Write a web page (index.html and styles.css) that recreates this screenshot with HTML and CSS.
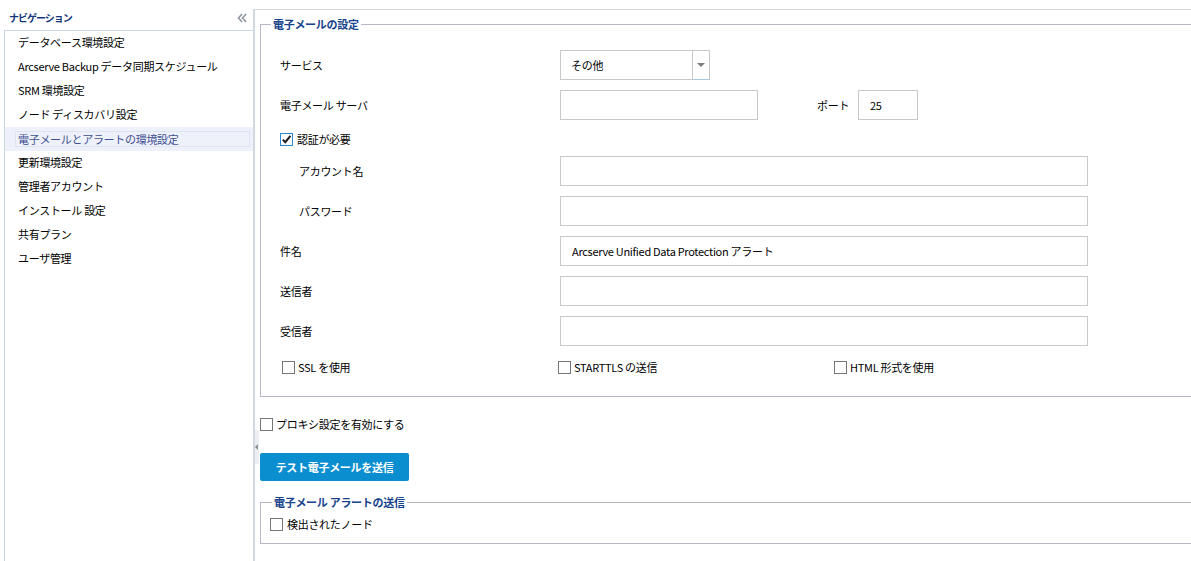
FILE: index.html
```html
<!DOCTYPE html>
<html lang="ja">
<head>
<meta charset="utf-8">
<title>電子メールとアラートの環境設定</title>
<link rel="stylesheet" href="styles.css">
</head>
<body>
<div class="app">
  <aside class="nav">
    <div class="nav-header">
      <span class="nav-title">ナビゲーション</span>
      <svg class="collapse" width="10" height="10" viewBox="0 0 10 10"><path d="M5 1 L1.5 5 L5 9 M9 1 L5.5 5 L9 9" fill="none" stroke="#8d96a0" stroke-width="1.6"/></svg>
    </div>
    <ul class="nav-list">
      <li class="nav-item">データベース環境設定</li>
      <li class="nav-item">Arcserve Backup データ同期スケジュール</li>
      <li class="nav-item">SRM 環境設定</li>
      <li class="nav-item">ノード ディスカバリ設定</li>
      <li class="nav-item selected"><span class="sel-inner">電子メールとアラートの環境設定</span></li>
      <li class="nav-item">更新環境設定</li>
      <li class="nav-item">管理者アカウント</li>
      <li class="nav-item">インストール 設定</li>
      <li class="nav-item">共有プラン</li>
      <li class="nav-item">ユーザ管理</li>
    </ul>
  </aside>
  <main class="content">
    <span class="splitter"><span class="splitter-arrow"></span></span>
    <fieldset class="group group-settings">
      <legend class="group-title">電子メールの設定</legend>
      <div class="row">
        <span class="lbl">サービス</span>
        <div class="combo"><span class="combo-value">その他</span><span class="combo-trigger"><span class="tri"></span></span></div>
      </div>
      <div class="row">
        <span class="lbl">電子メール サーバ</span>
        <div class="input w-server"></div>
        <span class="port-lbl">ポート</span>
        <div class="input w-port">25</div>
      </div>
      <div class="row row-check">
        <span class="cb checked"><svg width="11" height="11" viewBox="0 0 11 11"><path d="M1.8 5.6 L4.3 8.2 L9.4 1.8" fill="none" stroke="#1a1a1a" stroke-width="2"/></svg></span>
        <span class="cb-text">認証が必要</span>
      </div>
      <div class="row">
        <span class="lbl indent">アカウント名</span>
        <div class="input w-long"></div>
      </div>
      <div class="row">
        <span class="lbl indent">パスワード</span>
        <div class="input w-long"></div>
      </div>
      <div class="row">
        <span class="lbl">件名</span>
        <div class="input w-long">Arcserve Unified Data Protection アラート</div>
      </div>
      <div class="row">
        <span class="lbl">送信者</span>
        <div class="input w-long"></div>
      </div>
      <div class="row">
        <span class="lbl">受信者</span>
        <div class="input w-long"></div>
      </div>
      <div class="options">
        <div class="opt"><span class="cb"></span><span class="opt-text">SSL を使用</span></div>
        <div class="opt"><span class="cb"></span><span class="opt-text">STARTTLS の送信</span></div>
        <div class="opt"><span class="cb"></span><span class="opt-text">HTML 形式を使用</span></div>
      </div>
    </fieldset>
    <div class="proxy"><span class="cb"></span><span class="proxy-text">プロキシ設定を有効にする</span></div>
    <button class="btn" type="button">テスト電子メールを送信</button>
    <fieldset class="group group-alerts">
      <legend class="group-title">電子メール アラートの送信</legend>
      <div class="alert-row"><span class="cb"></span><span class="alert-text">検出されたノード</span></div>
    </fieldset>
  </main>
</div>
</body>
</html>
```

FILE: styles.css
```css
html, body {
  margin: 0;
  padding: 0;
  background: #ffffff;
}
body {
  font-family: "Noto Sans CJK JP", "Liberation Sans", sans-serif;
  font-size: 11px;
  line-height: 14px;
  letter-spacing: -0.3px;
  color: #000;
  width: 1191px;
  height: 561px;
  overflow: hidden;
}
.app {
  display: flex;
  height: 561px;
}

/* navigation */
.nav {
  width: 253px;
  flex: none;
  display: flex;
  flex-direction: column;
}
.nav-header {
  height: 30px;
  box-sizing: border-box;
  padding: 6px 6px 0 9px;
  display: flex;
  align-items: center;
  justify-content: space-between;
}
.nav-title {
  font-weight: bold;
  color: #15367a;
  font-size: 10px;
  letter-spacing: -1px;
}
.collapse {
  display: block;
}
.nav-list {
  list-style: none;
  margin: 0 0 0 4px;
  padding: 0;
  flex: 1;
  border-left: 1px solid #c9d5e1;
  border-top: 1px solid #c9d5e1;
}
.nav-item {
  height: 24px;
  line-height: 23px;
  padding-left: 13px;
  white-space: nowrap;
}
.nav-item.selected {
  background: #eef1fa;
  color: #3e4f92;
  padding: 4px 3px 4px 10px;
  box-sizing: border-box;
}
.sel-inner {
  display: block;
  height: 16px;
  line-height: 14px;
  padding-left: 2px;
  border: 1px solid #dde3f1;
  box-sizing: border-box;
}

/* content */
.content {
  flex: 1;
  min-width: 0;
  margin-top: 9px;
  border-top: 1px solid #d3d8dd;
  border-left: 2px solid #d0d9e3;
  padding-left: 5px;
  position: relative;
  overflow: hidden;
}
.splitter {
  position: absolute;
  left: 0;
  top: 420px;
  width: 4px;
  height: 34px;
  background: #eceef1;
  display: flex;
  align-items: center;
}
.splitter-arrow {
  width: 0;
  height: 0;
  border-top: 3px solid transparent;
  border-bottom: 3px solid transparent;
  border-right: 3px solid #8a8f96;
}

.group {
  margin: 7px 0 0 0;
  border: 1px solid #b6b9ca;
  width: 940px;
  min-width: 0;
  box-sizing: border-box;
}
.group-title {
  padding: 0 2px;
  font-weight: bold;
  color: #17438c;
  line-height: 14px;
}
.group-settings {
  padding: 19px 0 18px 19px;
}
.group-settings .group-title {
  margin-left: -9px;
}

.row {
  display: flex;
  align-items: center;
  height: 30px;
  margin-bottom: 10px;
}
.row.row-check {
  height: 18px;
  margin-bottom: 8px;
}
.lbl {
  width: 280px;
  flex: none;
  box-sizing: border-box;
}
.lbl.indent {
  padding-left: 19px;
}
.input {
  height: 30px;
  box-sizing: border-box;
  border: 1px solid #c9c9c9;
  padding-left: 11px;
  line-height: 28px;
  flex: none;
  white-space: nowrap;
}
.w-server { width: 198px; }
.w-port { width: 60px; }
.w-long { width: 528px; }
.port-lbl {
  width: 41px;
  margin-left: 59px;
  flex: none;
}

.combo {
  width: 150px;
  height: 30px;
  box-sizing: border-box;
  border: 1px solid #c9c9c9;
  display: flex;
}
.combo-value {
  flex: 1;
  padding-left: 10px;
  line-height: 28px;
}
.combo-trigger {
  width: 16px;
  border-left: 1px solid #c9c9c9;
  border-bottom: 1px solid #a9c6e6;
  margin-bottom: -1px;
  display: flex;
  align-items: center;
  justify-content: center;
}
.tri {
  width: 0;
  height: 0;
  border-left: 4px solid transparent;
  border-right: 4px solid transparent;
  border-top: 4px solid #7d7d7d;
}

.cb {
  width: 13px;
  height: 13px;
  box-sizing: border-box;
  border: 1px solid #767676;
  background: #fff;
  flex: none;
  display: flex;
  align-items: center;
  justify-content: center;
}
.cb.checked {
  border-color: #2b8ad0;
}
.cb-text {
  margin-left: 4px;
}

.options {
  display: flex;
  height: 22px;
  align-items: center;
}
.opt {
  width: 276px;
  display: flex;
  align-items: center;
  padding-left: 2px;
  box-sizing: border-box;
}
.opt-text {
  margin-left: 3px;
}

.proxy {
  display: flex;
  align-items: center;
  height: 22px;
  margin-top: 16px;
}
.proxy-text {
  margin-left: 3px;
}

.btn {
  display: block;
  margin-top: 18px;
  width: 149px;
  height: 28px;
  border: none;
  border-radius: 2px;
  background: #0b8ed0;
  color: #fff;
  font-family: inherit;
  font-size: 11px;
  font-weight: bold;
  letter-spacing: -0.3px;
  padding: 0;
  cursor: pointer;
}

.group-alerts {
  margin-top: 14px;
  padding: 4px 0 8px 9px;
}
.group-alerts .group-title {
  margin-left: 2px;
}
.alert-row {
  display: flex;
  align-items: center;
  height: 22px;
}
.alert-text {
  margin-left: 4px;
}
```
